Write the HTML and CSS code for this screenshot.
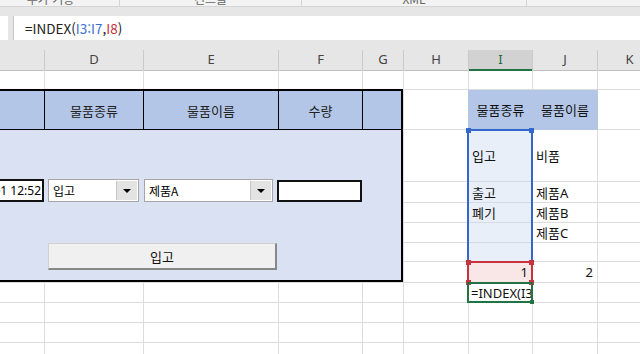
FILE: index.html
```html
<!DOCTYPE html>
<html lang="ko">
<head>
    <meta charset="UTF-8">
    <title>재고 관리 - 입출고</title>
    <link rel="stylesheet" href="styles.css">
</head>
<body>
    <div class="ribbon">
        <span class="ribbon-group group-addin">추가 기능</span>
        <span class="ribbon-group group-ctrl">컨트롤</span>
        <span class="ribbon-group group-xml">XML</span>
        <span class="ribbon-group group-rest"></span>
    </div>

    <div class="formula-bar">
        <div class="name-box"></div>
        <div class="formula-input">=INDEX(<span class="ref-blue">I3:I7</span>,<span class="ref-red">I8</span>)</div>
    </div>

    <div class="col-headers">
        <div class="col-head">C</div>
        <div class="col-head">D</div>
        <div class="col-head">E</div>
        <div class="col-head">F</div>
        <div class="col-head">G</div>
        <div class="col-head">H</div>
        <div class="col-head active">I</div>
        <div class="col-head">J</div>
        <div class="col-head">K</div>
    </div>

    <div class="sheet">
        <div class="cells">
            <!-- row 1 -->
            <div class="cell"></div><div class="cell"></div><div class="cell"></div><div class="cell"></div><div class="cell"></div><div class="cell"></div><div class="cell"></div><div class="cell"></div><div class="cell"></div>
            <!-- row 2 -->
            <div class="cell"></div><div class="cell"></div><div class="cell"></div><div class="cell"></div><div class="cell"></div><div class="cell before-hdr"></div>
            <div class="cell hdr">물품종류</div><div class="cell hdr">물품이름</div><div class="cell"></div>
            <!-- row 3 -->
            <div class="cell"></div><div class="cell"></div><div class="cell"></div><div class="cell"></div><div class="cell"></div><div class="cell"></div>
            <div class="cell in-blue">입고</div><div class="cell">비품</div><div class="cell"></div>
            <!-- row 4 -->
            <div class="cell"></div><div class="cell"></div><div class="cell"></div><div class="cell"></div><div class="cell"></div><div class="cell"></div>
            <div class="cell in-blue">출고</div><div class="cell">제품A</div><div class="cell"></div>
            <!-- row 5 -->
            <div class="cell"></div><div class="cell"></div><div class="cell"></div><div class="cell"></div><div class="cell"></div><div class="cell"></div>
            <div class="cell in-blue">폐기</div><div class="cell">제품B</div><div class="cell"></div>
            <!-- row 6 -->
            <div class="cell"></div><div class="cell"></div><div class="cell"></div><div class="cell"></div><div class="cell"></div><div class="cell"></div>
            <div class="cell in-blue"></div><div class="cell">제품C</div><div class="cell"></div>
            <!-- row 7 -->
            <div class="cell"></div><div class="cell"></div><div class="cell"></div><div class="cell"></div><div class="cell"></div><div class="cell"></div>
            <div class="cell in-blue"></div><div class="cell"></div><div class="cell"></div>
            <!-- row 8 -->
            <div class="cell"></div><div class="cell"></div><div class="cell"></div><div class="cell"></div><div class="cell"></div><div class="cell"></div>
            <div class="cell in-red num">1</div><div class="cell num">2</div><div class="cell"></div>
            <!-- row 9 -->
            <div class="cell"></div><div class="cell"></div><div class="cell"></div><div class="cell"></div><div class="cell"></div><div class="cell"></div>
            <div class="cell editing">=INDEX(I3:I7,I8)</div><div class="cell"></div><div class="cell"></div>
            <!-- rows 10-12 -->
            <div class="cell"></div><div class="cell"></div><div class="cell"></div><div class="cell"></div><div class="cell"></div><div class="cell"></div><div class="cell"></div><div class="cell"></div><div class="cell"></div>
            <div class="cell"></div><div class="cell"></div><div class="cell"></div><div class="cell"></div><div class="cell"></div><div class="cell"></div><div class="cell"></div><div class="cell"></div><div class="cell"></div>
            <div class="cell"></div><div class="cell"></div><div class="cell"></div><div class="cell"></div><div class="cell"></div><div class="cell"></div><div class="cell"></div><div class="cell"></div><div class="cell"></div>
        </div>

        <!-- floating form and range highlights drawn over the cells -->
        <div class="overlay">
            <div class="panel">
                <div class="panel-head">
                    <div class="panel-th"></div>
                    <div class="panel-th">물품종류</div>
                    <div class="panel-th">물품이름</div>
                    <div class="panel-th">수량</div>
                    <div class="panel-th last"></div>
                </div>
                <div class="panel-body">
                    <div class="form-row">
                        <div class="text-box date-box">2021-03-01 12:52</div>
                        <div class="combo combo-type">
                            <span class="combo-value">입고</span>
                            <span class="combo-btn"><i class="arrow"></i></span>
                        </div>
                        <div class="combo combo-name">
                            <span class="combo-value">제품A</span>
                            <span class="combo-btn"><i class="arrow"></i></span>
                        </div>
                        <div class="text-box qty-box"></div>
                    </div>
                    <button class="submit-button">입고</button>
                </div>
            </div>

            <div class="range range-blue">
                <span class="handle tl"></span><span class="handle tr"></span>
            </div>
            <div class="range range-red">
                <span class="handle tl"></span><span class="handle tr"></span>
                <span class="handle bl"></span><span class="handle br"></span>
            </div>
            <div class="range range-active">
                <span class="handle br small"></span>
            </div>
        </div>
    </div>
</body>
</html>
```

FILE: styles.css
```css
* {
    margin: 0;
    padding: 0;
    box-sizing: border-box;
}

:root {
    --cols: 125px 99px 135px 84px 41px 65px 64px 65px 64px;
    --rows: 20px 40px 52px 21px 20px 20px 19px 21px 20px 20px 20px 20px;
    --grid-line: #dcdcdc;
}

body {
    width: 640px;
    height: 354px;
    overflow: hidden;
    background-color: #fff;
    font-family: "Noto Sans", "Noto Sans CJK KR", sans-serif;
    color: #1a1a1a;
}

/* ribbon (only the bottom edge is visible) */
.ribbon {
    height: 7px;
    display: flex;
    overflow: hidden;
    background-color: #f3f3f3;
    border-bottom: 1px solid #d5d5d5;
}

.ribbon-group {
    margin-top: -8px;
    font-family: "Noto Sans CJK KR", sans-serif;
    font-size: 12px;
    line-height: 14px;
    color: #666;
    text-align: center;
    border-right: 1px solid #d5d5d5;
}

.group-addin {
    width: 120px;
    padding-right: 18px;
}

.group-ctrl {
    width: 182px;
}

.group-xml {
    width: 225px;
}

.group-rest {
    flex: 1;
    border-right: none;
}

/* formula bar */
.formula-bar {
    height: 43px;
    padding-top: 9px;
    display: flex;
    align-items: flex-start;
    background-color: #e6e6e6;
}

.name-box {
    width: 8px;
    height: 24px;
    background-color: #fff;
}

.formula-input {
    flex: 1;
    height: 24px;
    margin-left: 5px;
    padding-left: 11px;
    background-color: #fff;
    border-left: 1px solid #c8c8c8;
    font-family: "Noto Sans CJK KR", sans-serif;
    font-size: 13.5px;
    line-height: 24px;
    color: #222;
}

.ref-blue {
    color: #3b6fd0;
}

.ref-red {
    color: #c8323c;
}

/* column headers */
.col-headers {
    display: grid;
    grid-template-columns: var(--cols);
    height: 20px;
    margin-left: -80px;
    background-color: #e6e6e6;
}

.col-head {
    border-right: 1px solid #cacaca;
    border-bottom: 1px solid #bfbfbf;
    font-size: 13px;
    line-height: 19px;
    text-align: center;
    color: #444;
}

.col-head.active {
    background-color: #d2d2d2;
    border-bottom: 2px solid #217346;
    color: #1d6b3f;
}

/* sheet */
.sheet {
    position: relative;
    margin-left: -80px;
}

.cells {
    display: grid;
    grid-template-columns: var(--cols);
    grid-template-rows: var(--rows);
}

.cell {
    display: flex;
    align-items: center;
    padding: 0 3px;
    overflow: hidden;
    white-space: nowrap;
    font-size: 13px;
    color: #111;
    border-right: 1px solid var(--grid-line);
    border-bottom: 1px solid var(--grid-line);
}

.cell.hdr {
    justify-content: center;
    background-color: #b4c6e7;
    border-color: #b4c6e7;
}

.cell.before-hdr {
    border-right-color: #b4c6e7;
}

.cell.in-blue {
    background-color: #e9eff9;
    border-color: #d3dbe9;
}

.cell.in-red {
    background-color: #f9e6e6;
}

.cell.num {
    justify-content: flex-end;
    padding-right: 4px;
}

.cell.editing {
    padding-left: 2px;
}

.overlay {
    position: absolute;
    inset: 0;
    display: grid;
    grid-template-columns: var(--cols);
    grid-template-rows: var(--rows);
    pointer-events: none;
}

/* floating input form */
.panel {
    grid-column: 1 / 6;
    grid-row: 2 / 9;
    margin: -1px 1px 1px 0;
    display: flex;
    flex-direction: column;
    border: 2px solid #000;
    background-color: #d9e1f2;
    font-family: "Noto Sans CJK KR", sans-serif;
}

.panel-head {
    height: 39px;
    display: grid;
    grid-template-columns: 123px 99px 135px 84px 1fr;
    background-color: #b4c6e7;
    border-bottom: 1px solid #000;
}

.panel-th {
    display: flex;
    align-items: center;
    justify-content: center;
    font-size: 13px;
    color: #222;
    border-right: 1px solid #000;
}

.panel-th.last {
    border-right: none;
}

.panel-body {
    flex: 1;
    padding-top: 49px;
}

.form-row {
    display: flex;
    height: 23px;
}

.text-box {
    height: 23px;
    background-color: #fff;
    border: 2px solid #111;
}

.date-box {
    width: 122px;
    padding-right: 1px;
    overflow: hidden;
    white-space: nowrap;
    text-align: right;
    font-family: "Noto Sans", sans-serif;
    font-size: 12px;
    line-height: 19px;
    color: #000;
}

.qty-box {
    width: 85px;
    height: 22px;
    margin-top: 1px;
    margin-left: 4px;
}

.combo {
    display: flex;
    padding: 1px;
    background-color: #fff;
    border: 1px solid #a6a6a6;
}

.combo-type {
    width: 91px;
    margin-left: 4px;
}

.combo-name {
    width: 129px;
    margin-left: 5px;
}

.combo-value {
    flex: 1;
    padding-left: 3px;
    font-size: 12px;
    line-height: 19px;
    color: #000;
}

.combo-btn {
    width: 21px;
    display: flex;
    align-items: center;
    justify-content: center;
    background-color: #e3e3e3;
    border-left: 1px solid #c4c4c4;
}

.arrow {
    width: 0;
    height: 0;
    border-left: 4px solid transparent;
    border-right: 4px solid transparent;
    border-top: 4px solid #000;
}

.submit-button {
    display: block;
    width: 229px;
    height: 27px;
    margin: 41px 0 0 126px;
    background-color: #f0f0f0;
    border-top: 1px solid #d0d0d0;
    border-left: 1px solid #d0d0d0;
    border-right: 2px solid #888;
    border-bottom: 2px solid #888;
    font-family: "Noto Sans CJK KR", sans-serif;
    font-size: 13px;
    color: #111;
}

/* range highlights */
.range {
    position: relative;
    border: 2px solid;
}

.range-blue {
    grid-column: 7;
    grid-row: 3 / 8;
    margin: -1px 0 -1px -2px;
    border-color: #3467cc;
    color: #3467cc;
}

.range-red {
    grid-column: 7;
    grid-row: 8;
    margin: -1px 0 -1px -2px;
    border-color: #c8323c;
    color: #c8323c;
}

.range-active {
    grid-column: 7;
    grid-row: 9;
    margin: -1px 0 0 -2px;
    border-color: #217346;
    color: #217346;
}

.handle {
    position: absolute;
    width: 5px;
    height: 5px;
    background-color: currentColor;
}

.handle.tl { top: -3px; left: -3px; }
.handle.tr { top: -3px; right: -3px; }
.handle.bl { bottom: -3px; left: -3px; }
.handle.br { bottom: -3px; right: -3px; }

.handle.small {
    width: 4px;
    height: 4px;
    bottom: -3px;
    right: -3px;
}
```
